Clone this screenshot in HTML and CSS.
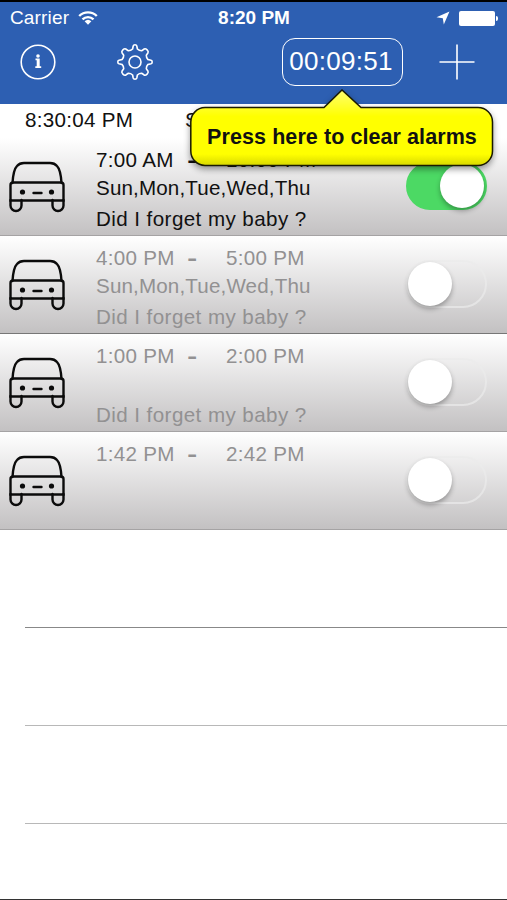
FILE: index.html
```html
<!DOCTYPE html>
<html lang="en">
	<head>
		<meta charset="utf-8" />
		<title>Alarms</title>
		<meta name="viewport" content="width=device-width, initial-scale=1.0" />
		<link rel="stylesheet" href="styles.css">
	</head>

	<body>
		<!-- shared shapes -->
		<svg class="defs" width="0" height="0">
			<symbol id="car" viewBox="0 0 56 52">
				<path d="M3.5 22 C4 14 5 8 8 5 Q10.500 2 15 2 H41 Q45.500 2 48 5 C51 8 52 14 52.500 22" />
				<path d="M4 21.500 H52 Q54.500 21.500 54.500 24 V39.500 H1.500 V24 Q1.500 21.500 4 21.500 Z" />
				<path d="M1.500 39 V44.500 A5.500 5.500 0 0 0 12.500 44.500 V39 M43.500 39 V44.500 A5.500 5.500 0 0 0 54.500 44.500 V39" />
				<path d="M24.500 32 H32.500" />
				<circle class="dot" cx="13.500" cy="31" r="2.600" />
				<circle class="dot" cx="42.500" cy="31" r="2.600" />
			</symbol>
		</svg>

		<div class="phone">
			<header>
				<div class="status">
					<div class="carrier">
						<span>Carrier</span>
						<svg width="20" height="16" viewBox="0 0 20 16">
							<path d="M1.200 6 A12.500 12.500 0 0 1 18.800 6 M4.500 9.300 A8 8 0 0 1 15.500 9.300" fill="none" stroke="#fff" stroke-width="2.400" />
							<path d="M6.600 11.300 A5 5 0 0 1 13.400 11.300 L10 14.800 Z" fill="#fff" />
						</svg>
					</div>
					<div class="now">8:20 PM</div>
					<div class="power">
						<svg width="14" height="14" viewBox="0 0 14 14">
							<path d="M13.500 0.500 L7.800 13.500 L6.800 7.200 L0.500 6.200 Z" fill="#fff" />
						</svg>
						<span class="battery"></span>
					</div>
				</div>
				<nav>
					<svg class="info" width="36" height="36" viewBox="0 0 36 36">
						<circle cx="18" cy="18" r="16.800" />
						<path class="solid" d="M15.500 14.500 H19.700 V22.300 H21.200 V24 H15.300 V22.300 H16.700 V16.200 H15.500 Z" />
						<circle class="solid" cx="18" cy="12" r="1.800" />
					</svg>
					<svg class="gear" width="36" height="36" viewBox="0 0 36 36">
						<circle cx="18" cy="18" r="6" />
						<path d="M15.600 5 L16.200 2 Q16.500 0.800 18 0.800 Q19.500 0.800 19.800 2 L20.400 5 Q22.300 6.800 24.800 6.700 L27.200 5 Q28.500 4.300 30.100 5.900 Q31.700 7.500 31 8.800 L29.300 11.200 Q29.200 13.700 31 15.600 L34 16.200 Q35.200 16.500 35.200 18 Q35.200 19.500 34 19.800 L31 20.400 Q29.200 22.300 29.300 24.800 L31 27.200 Q31.700 28.500 30.100 30.100 Q28.500 31.700 27.200 31 L24.800 29.300 Q22.300 29.200 20.400 31 L19.800 34 Q19.500 35.200 18 35.200 Q16.500 35.200 16.200 34 L15.600 31 Q13.700 29.200 11.200 29.300 L8.800 31 Q7.500 31.700 5.900 30.100 Q4.300 28.500 5 27.200 L6.700 24.800 Q6.800 22.300 5 20.400 L2 19.800 Q0.800 19.500 0.800 18 Q0.800 16.500 2 16.200 L5 15.600 Q6.800 13.700 6.700 11.200 L5 8.800 Q4.300 7.500 5.900 5.900 Q7.500 4.300 8.800 5 L11.200 6.700 Q13.700 6.800 15.600 5 Z" />
					</svg>
					<div class="timer">
						<span>00:09:51</span>
						<div class="bubble">
							<svg width="304" height="78" viewBox="0 0 304 78">
								<defs>
									<linearGradient id="glow" x1="0" y1="0" x2="0" y2="1">
										<stop offset="0" stop-color="#ffff70" />
										<stop offset="0.350" stop-color="#ffff00" />
										<stop offset="0.850" stop-color="#ffff00" />
										<stop offset="1" stop-color="#d8d800" />
									</linearGradient>
								</defs>
								<path d="M15 18.500 H134 L152 1 L171 18.500 H288 A14.500 14.500 0 0 1 302.500 33 V62 A14.500 14.500 0 0 1 288 76.500 H15 A14.500 14.500 0 0 1 0.800 62 V33 A14.500 14.500 0 0 1 15 18.500 Z" fill="url(#glow)" stroke="#1a1a00" stroke-width="1.500" />
							</svg>
							<span>Press here to clear alarms</span>
						</div>
					</div>
					<svg class="plus" width="36" height="36" viewBox="0 0 36 36">
						<path d="M18 0.500 V35.500 M0.500 18 H35.500" />
					</svg>
				</nav>
			</header>

			<div class="clock"><span>8:30:04 PM</span><span>Sun</span></div>

			<div class="row on">
				<svg class="car" width="56" height="52"><use href="#car" /></svg>
				<div class="text">
					<div class="time"><span>7:00 AM</span><b>-</b><span>10:00 PM</span></div>
					<div class="days">Sun,Mon,Tue,Wed,Thu</div>
					<div class="note">Did I forget my baby ?</div>
				</div>
				<div class="switch"><i></i></div>
			</div>
			<div class="row dark">
				<svg class="car" width="56" height="52"><use href="#car" /></svg>
				<div class="text">
					<div class="time"><span>4:00 PM</span><b>-</b><span>5:00 PM</span></div>
					<div class="days">Sun,Mon,Tue,Wed,Thu</div>
					<div class="note">Did I forget my baby ?</div>
				</div>
				<div class="switch"><i></i></div>
			</div>
			<div class="row">
				<svg class="car" width="56" height="52"><use href="#car" /></svg>
				<div class="text">
					<div class="time"><span>1:00 PM</span><b>-</b><span>2:00 PM</span></div>
					<div class="days"></div>
					<div class="note">Did I forget my baby ?</div>
				</div>
				<div class="switch"><i></i></div>
			</div>
			<div class="row">
				<svg class="car" width="56" height="52"><use href="#car" /></svg>
				<div class="text">
					<div class="time"><span>1:42 PM</span><b>-</b><span>2:42 PM</span></div>
					<div class="days"></div>
					<div class="note"></div>
				</div>
				<div class="switch"><i></i></div>
			</div>

			<div class="empty dark"></div>
			<div class="empty"></div>
			<div class="empty"></div>
		</div>
	</body>
</html>
```

FILE: styles.css
```css
* {
  box-sizing: border-box;
}
body {
  margin: 0;
  background: #fff;
  font-family: "Liberation Sans", Arial, sans-serif;
}
.defs {
  display: block;
}
.phone {
  width: 507px;
  height: 900px;
  overflow: hidden;
  border-top: 2px solid #000;
  border-bottom: 1px solid #333;
}

/* top bar */
header {
  height: 102px;
  background: #2d5fb2;
  color: #fff;
}
.status {
  display: grid;
  grid-template-columns: 1fr 90px 1fr;
  height: 32px;
  align-items: center;
  padding: 0 9px 0 10px;
  font-size: 19px;
  line-height: 32px;
}
.carrier, .power {
  display: flex;
  align-items: center;
}
.carrier {
  gap: 9px;
  letter-spacing: 0.15px;
}
.now {
  text-align: center;
  font-weight: bold;
  white-space: nowrap;
}
.power {
  justify-content: flex-end;
  gap: 9px;
}
.battery {
  position: relative;
  width: 36px;
  height: 15px;
  margin-right: 3px;
  border-radius: 2px;
  background: #fff;
}
.battery:after {
  content: "";
  position: absolute;
  right: -3px;
  top: 5px;
  width: 2px;
  height: 5px;
  border-radius: 0 2px 2px 0;
  background: #fff;
}
nav {
  display: flex;
  align-items: center;
  padding: 4px 0 0 20px;
}
nav svg {
  fill: none;
  stroke: #fff;
  stroke-width: 1.6;
}
nav .solid {
  fill: #fff;
  stroke: none;
}
.gear {
  margin-left: 61px;
}
.timer {
  position: relative;
  width: 121px;
  height: 48px;
  margin-left: 129px;
  border: 1.5px solid #fff;
  border-radius: 13px;
  padding-right: 3px;
  text-align: center;
  font-size: 26px;
  line-height: 45px;
  letter-spacing: 0.3px;
}
.plus {
  margin-left: 36px;
}
.bubble {
  position: absolute;
  left: -93px;
  top: 50px;
  width: 304px;
  height: 78px;
  z-index: 2;
}
.bubble svg {
  display: block;
  filter: drop-shadow(0 3px 3px rgba(0, 0, 0, 0.4));
}
.bubble span {
  position: absolute;
  left: 0;
  top: 18px;
  width: 304px;
  color: #111;
  font-size: 21.5px;
  font-weight: bold;
  line-height: 60px;
  letter-spacing: 0.08px;
  white-space: nowrap;
}

/* alarm list */
.clock {
  display: flex;
  height: 34px;
  padding-left: 25px;
  color: #111;
  font-size: 20.6px;
  line-height: 31px;
  letter-spacing: 0.3px;
}
.clock span:first-child {
  width: 160px;
}
.row {
  display: flex;
  height: 98px;
  padding-left: 9px;
  border-bottom: 1px solid #a5a3a4;
  background: linear-gradient(#fff, #c3c1c2);
  color: #929192;
}
.row.dark {
  border-bottom-color: #777;
}
.row.on {
  color: #111;
}
.car {
  margin-top: 23px;
  fill: none;
  stroke: #0b0b0b;
  stroke-width: 2.4;
  stroke-linecap: round;
}
.car, .text, .switch {
  flex-shrink: 0;
}
.dot {
  fill: #0b0b0b;
  stroke: none;
}
.text {
  width: 310px;
  padding: 8px 0 0 31px;
  font-size: 20.6px;
  letter-spacing: 0.3px;
  white-space: nowrap;
}
.time {
  display: flex;
  height: 27px;
  line-height: 27px;
}
.time span:first-child {
  width: 91px;
}
.time b {
  width: 39px;
  font-size: 31px;
  font-weight: normal;
}
.days {
  height: 32px;
  line-height: 29px;
  letter-spacing: 0.15px;
}
.note {
  line-height: 28px;
  letter-spacing: 0.42px;
}
.switch {
  width: 81px;
  height: 48px;
  margin: 24px 0 0 31px;
  border: 2px solid rgba(235, 235, 235, 0.7);
  border-radius: 24px;
}
.switch i {
  display: block;
  width: 44px;
  height: 44px;
  border-radius: 22px;
  background: #fff;
  box-shadow: 0 3px 5px rgba(0, 0, 0, 0.3);
}
.on .switch {
  border-color: #4cd964;
  background: #4cd964;
}
.on .switch i {
  margin-left: 32px;
}
.empty {
  height: 98px;
  margin-left: 25px;
  border-bottom: 1px solid #b8b8b8;
}
.empty.dark {
  border-bottom-color: #888;
}
```
